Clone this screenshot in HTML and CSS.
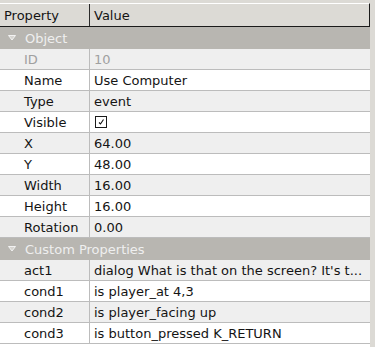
FILE: index.html
```html
<!DOCTYPE html>
<html>
<head>
<meta charset="utf-8">
<link rel="stylesheet" href="styles.css">
</head>
<body>
<div class="frame">
  <div class="view">
    <div class="header">
      <div class="hcell key">Property</div>
      <div class="hcell val">Value</div>
    </div>
    <div class="group">
      <svg class="arrow" width="8" height="6" viewBox="0 0 8 6"><polygon points="0.5,0.5 7.5,0.5 4,5" fill="#d6d4d0" stroke="#f2f2f2" stroke-width="1"/></svg>
      <span>Object</span>
    </div>
    <div class="row alt disabled"><div class="key">ID</div><div class="val">10</div></div>
    <div class="row"><div class="key">Name</div><div class="val">Use Computer</div></div>
    <div class="row alt"><div class="key">Type</div><div class="val">event</div></div>
    <div class="row"><div class="key">Visible</div><div class="val"><span class="check"><svg width="10" height="10" viewBox="0 0 10 10"><path d="M3 5.5 L4.5 7 L7.5 2.5" fill="none" stroke="#111" stroke-width="1.1"/></svg></span></div></div>
    <div class="row alt"><div class="key">X</div><div class="val">64.00</div></div>
    <div class="row"><div class="key">Y</div><div class="val">48.00</div></div>
    <div class="row alt"><div class="key">Width</div><div class="val">16.00</div></div>
    <div class="row"><div class="key">Height</div><div class="val">16.00</div></div>
    <div class="row alt"><div class="key">Rotation</div><div class="val">0.00</div></div>
    <div class="group">
      <svg class="arrow" width="8" height="6" viewBox="0 0 8 6"><polygon points="0.5,0.5 7.5,0.5 4,5" fill="#d6d4d0" stroke="#f2f2f2" stroke-width="1"/></svg>
      <span>Custom Properties</span>
    </div>
    <div class="row alt"><div class="key">act1</div><div class="val">dialog What is that on the screen? It's t...</div></div>
    <div class="row"><div class="key">cond1</div><div class="val">is player_at 4,3</div></div>
    <div class="row alt"><div class="key">cond2</div><div class="val">is player_facing up</div></div>
    <div class="row"><div class="key">cond3</div><div class="val">is button_pressed K_RETURN</div></div>
  </div>
</div>
</body>
</html>
```
FILE: styles.css
```css
html, body {
  margin: 0;
  padding: 0;
  background: #dcdad5;
}
body {
  font-family: "DejaVu Sans", sans-serif;
  font-size: 13px;
  color: #141414;
}
.frame {
  width: 375px;
  height: 347px;
  overflow: hidden;
  padding-top: 3px;
  box-sizing: border-box;
}
.view {
  width: 370px;
  height: 344px;
  background: #ffffff;
  display: flex;
  flex-direction: column;
}
.header {
  display: flex;
  height: 24px;
  box-sizing: border-box;
  background: #dcdad5;
  border-top: 1px solid #ffffff;
  border-bottom: 1px solid #1a1a1a;
  border-right: 1px solid #1a1a1a;
}
.hcell {
  display: flex;
  align-items: center;
}
.hcell.key {
  width: 90px;
  padding-left: 4px;
  box-sizing: border-box;
  border-right: 1px solid #2a2a2a;
}
.hcell.val {
  padding-left: 4px;
}
.group {
  height: 22px;
  background: #b8b6b1;
  color: #efefef;
  display: flex;
  align-items: center;
  padding-left: 8px;
}
.arrow {
  display: block;
  margin-right: 9px;
}
.row {
  display: flex;
  height: 21px;
  box-sizing: border-box;
  border-bottom: 1px solid #bcbcbc;
  background: #ffffff;
}
.row.alt {
  background: #efefef;
}
.row .key {
  width: 90px;
  box-sizing: border-box;
  padding-left: 24px;
  border-right: 1px solid #bcbcbc;
  display: flex;
  align-items: center;
}
.row .val {
  flex: 1;
  padding-left: 4px;
  display: flex;
  align-items: center;
  white-space: nowrap;
  overflow: hidden;
}
.row.disabled {
  color: #a0a0a0;
}
.check {
  width: 12px;
  height: 12px;
  box-sizing: border-box;
  border: 1px solid #1a1a1a;
  background: #ffffff;
  display: flex;
  align-items: center;
  justify-content: center;
  margin-left: 1px;
}
.check svg {
  display: block;
}
```
